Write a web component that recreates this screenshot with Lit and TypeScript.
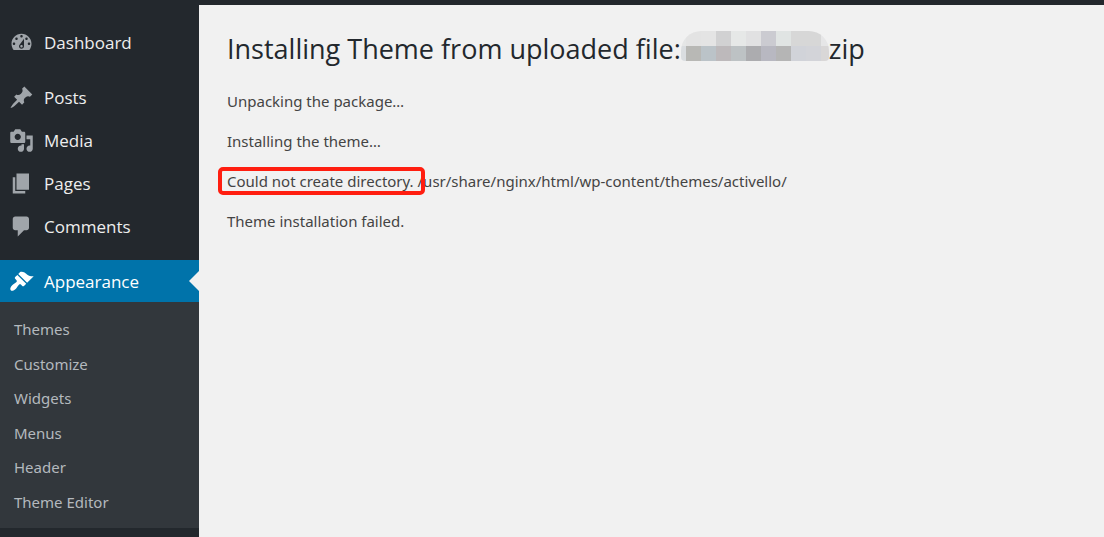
import { LitElement, html, css, svg } from "lit";
import { customElement } from "lit/decorators.js";
import { classMap } from "lit/directives/class-map.js";

const ICONS: Record<string, string> = {
  dashboard:
    "M3.76 16h12.48c1.1-1.37 1.76-3.11 1.76-5 0-4.42-3.58-8-8-8s-8 3.58-8 8c0 1.89.66 3.63 1.76 5zM10 4c.55 0 1 .45 1 1s-.45 1-1 1-1-.45-1-1 .45-1 1-1zM6 6c.55 0 1 .45 1 1s-.45 1-1 1-1-.45-1-1 .45-1 1-1zm8 0c.55 0 1 .45 1 1s-.45 1-1 1-1-.45-1-1 .45-1 1-1zm-5.37 5.55L12 7v6c0 1.1-.9 2-2 2s-2-.9-2-2c0-.57.24-1.08.63-1.45zM4 10c.55 0 1 .45 1 1s-.45 1-1 1-1-.45-1-1 .45-1 1-1zm12 0c.55 0 1 .45 1 1s-.45 1-1 1-1-.45-1-1 .45-1 1-1zm-5 3c0-.55-.45-1-1-1s-1 .45-1 1 .45 1 1 1 1-.45 1-1z",
  posts:
    "M10.44 3.02l1.82-1.82 6.36 6.35-1.83 1.82c-1.05-.68-2.48-.57-3.41.36l-.75.75c-.92.93-1.04 2.35-.35 3.41l-1.83 1.82-2.41-2.41-2.8 2.79c-.42.42-3.38 2.71-3.8 2.29s1.86-3.39 2.28-3.81l2.79-2.79L4.1 9.36l1.83-1.82c1.05.69 2.48.57 3.4-.36l.75-.75c.93-.92 1.05-2.35.36-3.41z",
  media:
    "M13 11V4c0-.55-.45-1-1-1h-1.67L9 1H5L3.67 3H2c-.55 0-1 .45-1 1v7c0 .55.45 1 1 1h10c.55 0 1-.45 1-1zM7 4.5c1.38 0 2.5 1.12 2.5 2.5S8.38 9.5 7 9.5 4.5 8.38 4.5 7 5.62 4.5 7 4.5zM14 6h5v10.5c0 1.38-1.12 2.5-2.5 2.5S14 17.88 14 16.5s1.12-2.5 2.5-2.5c.17 0 .34.02.5.05V9h-3V6zm-4 8.05V13h2v3.5c0 1.38-1.12 2.5-2.5 2.5S7 17.88 7 16.5 8.12 14 9.5 14c.17 0 .34.02.5.05z",
  pages: "M6 15V2h10v13H6zm-1 1h8v2H3V5h2v11z",
  comments:
    "M5 2h9c1.1 0 2 .9 2 2v7c0 1.1-.9 2-2 2h-2l-5 5v-5H5c-1.1 0-2-.9-2-2V4c0-1.1.9-2 2-2z",
  appearance:
    "M14.48 11.06L7.41 3.99l1.5-1.5c.5-.56 2.3-.47 3.51.32 1.21.8 1.43 1.28 2.91 2.1 1.18.64 2.45 1.26 4.45.85zm-.71.71L6.7 4.7 4.93 6.47c-.39.39-.39 1.02 0 1.41l1.06 1.06c.39.39.39 1.03 0 1.42-.6.6-1.43 1.11-2.21 1.69-.35.26-.7.53-1.01.84C1.43 14.23.4 16.08 1.4 17.07c.99 1 2.84-.03 4.18-1.36.31-.31.58-.66.85-1.02.57-.78 1.08-1.61 1.69-2.21.39-.39 1.02-.39 1.41 0l1.06 1.06c.39.39 1.02.39 1.41 0z",
};

const GROUPS = [
  [{ icon: "dashboard", label: "Dashboard" }],
  [
    { icon: "posts", label: "Posts" },
    { icon: "media", label: "Media" },
    { icon: "pages", label: "Pages" },
    { icon: "comments", label: "Comments" },
  ],
  [{ icon: "appearance", label: "Appearance" }],
];

const SUBMENU = ["Themes", "Customize", "Widgets", "Menus", "Header", "Theme Editor"];

@customElement("admin-menu")
class AdminMenu extends LitElement {
  static styles = css`
    :host {
      display: block;
      padding-top: 16px;
      background: #23282d;
      font-family: "Open Sans", "Noto Sans", sans-serif;
      font-size: 17px;
    }
    ul {
      margin: 0;
      padding: 0;
      list-style: none;
    }
    .group + .group {
      margin-top: 12px;
    }
    .item {
      position: relative;
      display: flex;
      align-items: center;
      gap: 10px;
      height: 43px;
      padding-left: 9px;
      color: #eee;
      text-decoration: none;
    }
    .item svg {
      width: 25px;
      height: 25px;
      flex: none;
      fill: #a0a5aa;
    }
    .item.current {
      height: 42px;
      background: #0073aa;
      color: #fff;
    }
    .current svg {
      fill: #fff;
    }
    .current::after {
      content: "";
      position: absolute;
      right: 0;
      top: 50%;
      margin-top: -10px;
      border: 10px solid transparent;
      border-left-width: 0;
      border-right-color: #f1f1f1;
    }
    .submenu {
      display: grid;
      grid-auto-rows: 1fr;
      height: 207px;
      padding: 10px 14px 9px;
      background: #32373c;
      font-family: "Noto Sans", "Open Sans", sans-serif;
      font-size: 15px;
    }
    .submenu li {
      display: flex;
      align-items: center;
    }
    .submenu a {
      color: #b4b9be;
      text-decoration: none;
    }
  `;

  render() {
    return html`<nav aria-label="Main menu">
      ${GROUPS.map(
        (group) => html`<ul class="group">
          ${group.map(
            (item) => html`<li>
              <a href="#" class=${classMap({ item: true, current: item.icon === "appearance" })}>
                <svg viewBox="0 0 20 20" aria-hidden="true">
                  ${svg`<path fill-rule="nonzero" d=${ICONS[item.icon]}></path>`}
                </svg>
                <span>${item.label}</span>
              </a>
            </li>`
          )}
        </ul>`
      )}
      <ul class="submenu">
        ${SUBMENU.map((label) => html`<li><a href="#">${label}</a></li>`)}
      </ul>
    </nav>`;
  }
}

const MOSAIC = [
  ["#e5e6e6", "#e3e3e3", "#e4e4e4", "#d1d1d2", "#e6e8e7", "#e1e1e2", "#cbcbd1", "#e0e4e3", "#d7d7d7", "#d7d7d7", "#e6e6e7"],
  ["#dadde0", "#b8b8b5", "#bbc3c8", "#bdb9bb", "#bdc2c4", "#acacaf", "#b8b8c1", "#b5b5b5", "#d1d3d9", "#d3d4d9", "#d9d7d7"],
];

@customElement("app-root")
class AppRoot extends LitElement {
  static styles = css`
    :host {
      display: grid;
      grid-template-columns: 199px 1fr;
      min-height: 100vh;
      box-sizing: border-box;
      border-top: 5px solid #23282d;
      background: #f1f1f1;
      color: #444;
      font-family: "Noto Sans", "Open Sans", sans-serif;
      font-size: 15px;
    }
    main {
      padding: 24px 28px;
    }
    h1 {
      display: flex;
      align-items: center;
      margin: 0;
      color: #23282d;
      font-family: "Open Sans", "Noto Sans", sans-serif;
      font-size: 27px;
      font-weight: 400;
      line-height: 40px;
    }
    .mosaic {
      width: 148px;
      height: 30px;
      margin-bottom: 6px;
      border-radius: 20px 20px 4px 4px;
      overflow: hidden;
    }
    p {
      margin: 0;
      line-height: 20px;
    }
    .log {
      display: grid;
      gap: 20px;
      margin-top: 22px;
    }
    .marked {
      position: relative;
    }
    .marked::after {
      content: "";
      position: absolute;
      inset: -4px -11px -4px -9px;
      border: 4px solid #ff1e10;
      border-radius: 5px;
    }
  `;

  render() {
    return html`
      <admin-menu></admin-menu>
      <main>
        <h1>
          <span>Installing Theme from uploaded file:</span>
          <svg class="mosaic" viewBox="10 0 148 30" aria-hidden="true">
            ${MOSAIC.map((row, y) =>
              row.map((c, x) => svg`<rect x=${x * 15} y=${y * 15} width="15" height="15" fill=${c} shape-rendering="crispEdges"></rect>`)
            )}
          </svg>
          <span>zip</span>
        </h1>
        <div class="log">
          <p>Unpacking the package…</p>
          <p>Installing the theme…</p>
          <p><span class="marked">Could not create directory.</span> /usr/share/nginx/html/wp-content/themes/activello/</p>
          <p>Theme installation failed.</p>
        </div>
      </main>
    `;
  }
}
